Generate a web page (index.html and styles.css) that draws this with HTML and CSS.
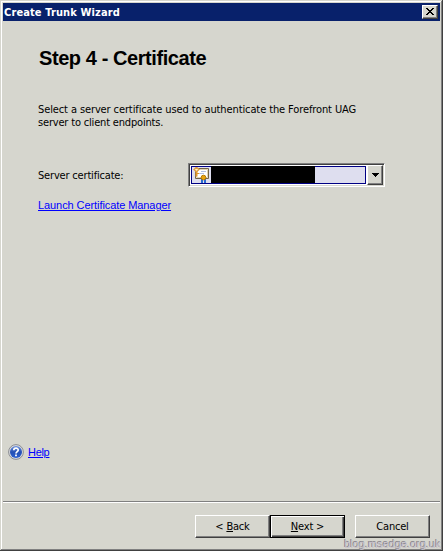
FILE: index.html
```html
<!DOCTYPE html>
<html lang="en">
<head>
<meta charset="utf-8">
<title>Create Trunk Wizard</title>
<link rel="stylesheet" href="styles.css">
</head>
<body>
<div class="window">
  <header class="titlebar">
    <span class="title">Create Trunk Wizard</span>
    <button class="close" aria-label="Close">
      <svg width="8" height="7" viewBox="0 0 8 7" shape-rendering="crispEdges"><path d="M0 0h2v1h1v1h2V1h1V0h2v1H7v1H6v1H5v1h1v1h1v1h1v1H6V6H5V5H3v1H2v1H0V6h1V5h1V4h1V3H2V2H1V1H0z"/></svg>
    </button>
  </header>
  <main class="page">
    <h1 class="heading">Step 4 - Certificate</h1>
    <p class="intro"><span class="line-one">Select a server certificate used to authenticate the Forefront UAG</span><br><span class="line-two">server to client endpoints.</span></p>
    <div class="field">
      <span class="label">Server certificate:</span>
      <div class="combo">
        <div class="selected">
          <svg class="cert" width="19" height="16" viewBox="0 0 19 16">
            <path fill="#fff" stroke="#736448" d="M3.500 1.500h13v10h-13z"/>
            <path stroke="#e0d3b4" fill="none" d="M4.500 2.500h11v8h-11z"/>
            <path stroke="#b3c0e4" d="M9 4.500h5M7 6.500h5"/>
            <path fill="#2868d0" d="M9 12h2v4H9zM12 12h2v4h-2z"/>
            <circle cx="11.500" cy="10.500" r="2.300" fill="#e8a410" stroke="#b87800"/>
            <path stroke="#e1962a" stroke-width="2" d="M4.500 4v5.500"/><path stroke="#e1962a" d="M5 6.500h2"/>
            <path fill="#fff3cf" stroke="#dda047" stroke-width="1.300" d="M4.500.2 7 2.400 4.500 4.800 2 2.400z"/>
          </svg>
          <span class="redacted"></span>
        </div>
        <button class="drop" aria-label="Open list">
          <svg width="7" height="4" viewBox="0 0 7 4" shape-rendering="crispEdges"><path d="M0 0h7v1H6v1H5v1H4v1H3V3H2V2H1V1H0z"/></svg>
        </button>
      </div>
    </div>
    <a class="link launch">Launch Certificate Manager</a>
    <div class="help">
      <svg width="16" height="16" viewBox="0 0 16 16">
        <defs><linearGradient id="orb" x2="0" y2="1"><stop stop-color="#6f93df"/><stop offset=".5" stop-color="#2450b4"/><stop offset="1" stop-color="#2a5fd0"/></linearGradient></defs>
        <circle cx="8" cy="8" r="7.400" fill="#d9dbe0" stroke="#8b8d92"/>
        <circle cx="8" cy="8" r="6" fill="url(#orb)"/>
        <path fill="none" stroke="#fff" stroke-width="1.700" d="M5.800 6.200C5.800 3.400 10.300 3.600 10.200 6c0 1.600-2.100 1.600-2.200 3.500"/>
        <path fill="#fff" d="M7.100 10.600h1.800v1.700H7.100z"/>
      </svg>
      <a class="link">Help</a>
    </div>
  </main>
  <footer class="actions">
    <button class="btn back">&lt; <u>B</u>ack</button>
    <button class="btn next"><u>N</u>ext &gt;</button>
    <button class="btn cancel">Cancel</button>
  </footer>
  <span class="watermark">blog.msedge.org.uk</span>
</div>
</body>
</html>
```
FILE: styles.css
```css
* { box-sizing: border-box; }
body { margin: 0; background: #d6d6ce; }
button { margin: 0; padding: 0; border-radius: 0; color: #000; }
svg { display: block; flex: none; }

.window {
  position: relative;
  display: flex;
  flex-direction: column;
  width: 443px;
  height: 551px;
  padding: 3px 3px 2px;
  background: #d6d6ce;
  box-shadow: inset -1px -1px #404040, inset 0 1px #d6d6ce, inset 1px 0 #d6d6ce, inset -2px -2px #808080, inset 2px 2px #fff;
  color: #000;
  font: 11px/13px "DejaVu Sans Condensed", "DejaVu Sans", sans-serif;
  white-space: nowrap;
  overflow: hidden;
}
.titlebar {
  display: flex;
  align-items: center;
  justify-content: space-between;
  height: 18px;
  padding: 0 2px 0 1px;
  background: #08216b;
}
.title { color: #fff; font-weight: bold; letter-spacing: .12px; }
.close, .drop, .btn {
  display: flex;
  align-items: center;
  justify-content: center;
  background: #d6d6ce;
  border: 1px solid;
  border-color: #fff #404040 #404040 #fff;
  box-shadow: inset -1px -1px #808080;
}
.close { width: 16px; height: 14px; padding-bottom: 1px; }

.page { display: flex; flex-direction: column; height: 481px; padding-left: 35px; border-bottom: 1px solid #808080; }
.heading { margin: 25px 0 0 1px; font: bold 20px/24px "Liberation Sans", Arial, sans-serif; letter-spacing: -.42px; }
.intro { margin: 33px 0 0; }
.line-one { letter-spacing: -.11px; }
.line-two, .label { letter-spacing: -.18px; }
.field { display: flex; align-items: center; height: 24px; margin-top: 34px; }
.label { width: 150px; }
.combo {
  display: flex;
  width: 197px;
  height: 24px;
  padding: 2px 1px 2px 2px;
  background: #fff;
  border: 1px solid;
  border-color: #808080 #fff #fff #808080;
  box-shadow: inset 1px 1px #404040, inset -1px -1px #d6d6ce;
}
.selected {
  display: flex;
  width: 175px;
  height: 18px;
  background: #dedeef;
  border: 1px solid #000084;
}
.redacted { width: 104px; height: 17px; margin-top: -1px; background: #000; }
.drop { width: 16px; height: 20px; margin: -1px 0 0 1px; }
.link { color: #00f; font: 11px/13px "Liberation Sans", Arial, sans-serif; letter-spacing: -.08px; text-decoration: underline; text-decoration-thickness: 1px; text-underline-offset: 1px; }
.launch { margin-top: 12px; align-self: flex-start; }
.help { display: flex; align-items: center; gap: 4px; margin: auto 0 41px -30px; }
.help .link { letter-spacing: -.3px; }

.actions { display: flex; height: 47px; padding: 12px 10px 0 0; border-top: 1px solid #fff; justify-content: flex-end; }
.btn { width: 75px; height: 23px; font: inherit; letter-spacing: -.2px; white-space: pre; }
.next { border-color: #000; box-shadow: inset 1px 1px #fff, inset -1px -1px #404040, inset -2px -2px #808080; }
.cancel { margin-left: 10px; }
u { text-decoration: underline; text-decoration-thickness: 1px; text-underline-offset: 1px; }
.watermark {
  position: absolute;
  right: 2px;
  bottom: 0;
  font: 11px/13px "Liberation Sans", Arial, sans-serif;
  color: #c6c0ca;
  text-shadow: -1px -1px #87838c;
}
```
